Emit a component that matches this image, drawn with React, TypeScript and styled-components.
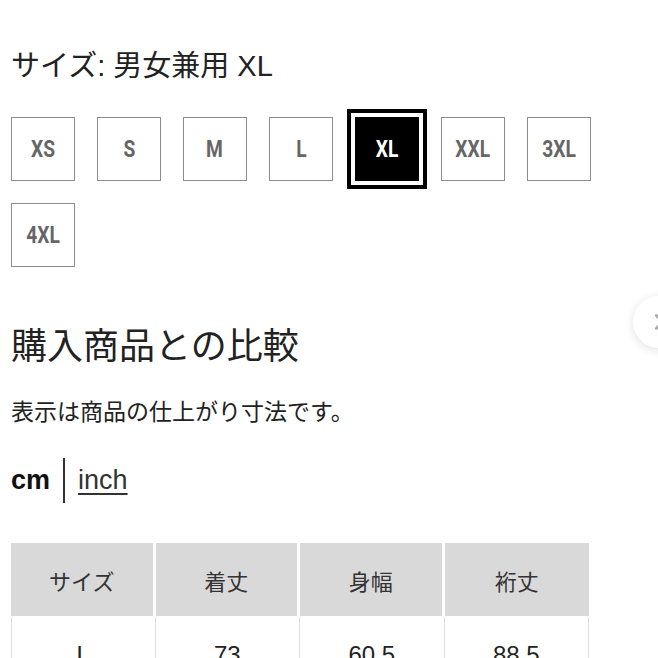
import styled, { createGlobalStyle } from "styled-components";

const GlobalStyle = createGlobalStyle`
  html, body {
    margin: 0;
    padding: 0;
    background: #fff;
  }
  body {
    font-family: "Liberation Sans", "Noto Sans CJK JP", sans-serif;
    color: #222;
    overflow: hidden;
  }
`;

const sizes = ["XS", "S", "M", "L", "XL", "XXL", "3XL", "4XL"];
const selected = "XL";

const headers = ["サイズ", "着丈", "身幅", "裄丈"];
const row = ["L", "73", "60.5", "88.5"];

export default function App() {
  return (
    <Page>
      <GlobalStyle />

      <Title>サイズ: 男女兼用 XL</Title>

      <SizeGrid>
        {sizes.map((s) => (
          <SizeBox key={s} $active={s === selected}>
            <Label>{s}</Label>
          </SizeBox>
        ))}
      </SizeGrid>

      <Heading>購入商品との比較</Heading>
      <Note>表示は商品の仕上がり寸法です。</Note>

      <UnitSwitch>
        <Unit $active>cm</Unit>
        <Divider />
        <UnitLink>inch</UnitLink>
      </UnitSwitch>

      <Table>
        <thead>
          <tr>
            {headers.map((h) => (
              <Th key={h}>{h}</Th>
            ))}
          </tr>
        </thead>
        <tbody>
          <tr>
            {row.map((v, i) => (
              <Td key={i}>{v}</Td>
            ))}
          </tr>
        </tbody>
      </Table>

      <NextButton>
        <svg width="22" height="22" viewBox="0 0 24 24" fill="none">
          <path
            d="M9 5l7 7-7 7"
            stroke="#aaa"
            strokeWidth="3"
            strokeLinecap="round"
            strokeLinejoin="round"
          />
        </svg>
      </NextButton>
    </Page>
  );
}

const Page = styled.div`
  position: relative;
  width: 658px;
  height: 658px;
  padding: 47px 0 0 11px;
  box-sizing: border-box;
  overflow: hidden;
`;

const Title = styled.h1`
  margin: 0 0 31px;
  font-size: 29px;
  font-weight: 400;
  line-height: 39px;
  color: #222;
`;

const SizeGrid = styled.div`
  display: flex;
  flex-wrap: wrap;
  gap: 22px;
  width: 620px;
`;

const SizeBox = styled.div<{ $active?: boolean }>`
  display: flex;
  align-items: center;
  justify-content: center;
  width: 64px;
  height: 64px;
  box-sizing: border-box;
  border: 1.5px solid ${(p) => (p.$active ? "#000" : "#8c8c8c")};
  background: ${(p) => (p.$active ? "#000" : "#fff")};
  color: ${(p) => (p.$active ? "#fff" : "#666")};
  box-shadow: ${(p) =>
    p.$active ? "0 0 0 4px #fff, 0 0 0 8px #000" : "none"};
`;

const Label = styled.span`
  display: inline-block;
  font-family: Roboto, "Liberation Sans", sans-serif;
  font-weight: 700;
  font-size: 24px;
  transform: scaleX(0.8);
`;

const Heading = styled.h2`
  margin: 53px 0 28px;
  font-family: "Noto Sans CJK JP", sans-serif;
  font-size: 36px;
  font-weight: 400;
  line-height: 46px;
  color: #222;
`;

const Note = styled.p`
  margin: 0;
  font-family: "Noto Sans CJK JP", sans-serif;
  font-size: 23px;
  line-height: 32px;
  color: #222;
`;

const UnitSwitch = styled.div`
  display: flex;
  align-items: center;
  gap: 13px;
  margin-top: 31px;
  height: 46px;
`;

const Unit = styled.span<{ $active?: boolean }>`
  font-size: 27px;
  font-weight: ${(p) => (p.$active ? 700 : 400)};
  color: #111;
`;

const Divider = styled.span`
  width: 2px;
  height: 45px;
  background: #333;
`;

const UnitLink = styled.a`
  font-size: 27px;
  color: #333;
  text-decoration: underline;
  text-underline-offset: 4px;
  text-decoration-thickness: 1.5px;
`;

const Table = styled.table`
  margin-top: 40px;
  width: 578px;
  border-collapse: separate;
  border-spacing: 0;
  table-layout: fixed;
  font-family: "Liberation Sans", "Noto Sans CJK JP", sans-serif;
`;

const Th = styled.th`
  height: 73px;
  padding: 0;
  background: #d9d9d9;
  border-right: 3px solid #fff;
  border-bottom: 2px solid #fff;
  font-family: "Noto Sans CJK JP", sans-serif;
  font-size: 22px;
  font-weight: 400;
  color: #333;

  &:last-child {
    border-right: none;
  }
`;

const Td = styled.td`
  height: 73px;
  padding: 0;
  text-align: center;
  border-right: 1.5px solid #ddd;
  border-bottom: 1.5px solid #ddd;
  font-size: 24px;
  color: #222;

  &:first-child {
    border-left: 1.5px solid #ddd;
  }
`;

const NextButton = styled.div`
  position: absolute;
  top: 296px;
  left: 633px;
  width: 52px;
  height: 52px;
  border-radius: 50%;
  background: #fff;
  box-shadow: 0 2px 10px rgba(0, 0, 0, 0.12);
  display: flex;
  align-items: center;
  justify-content: center;
`;
